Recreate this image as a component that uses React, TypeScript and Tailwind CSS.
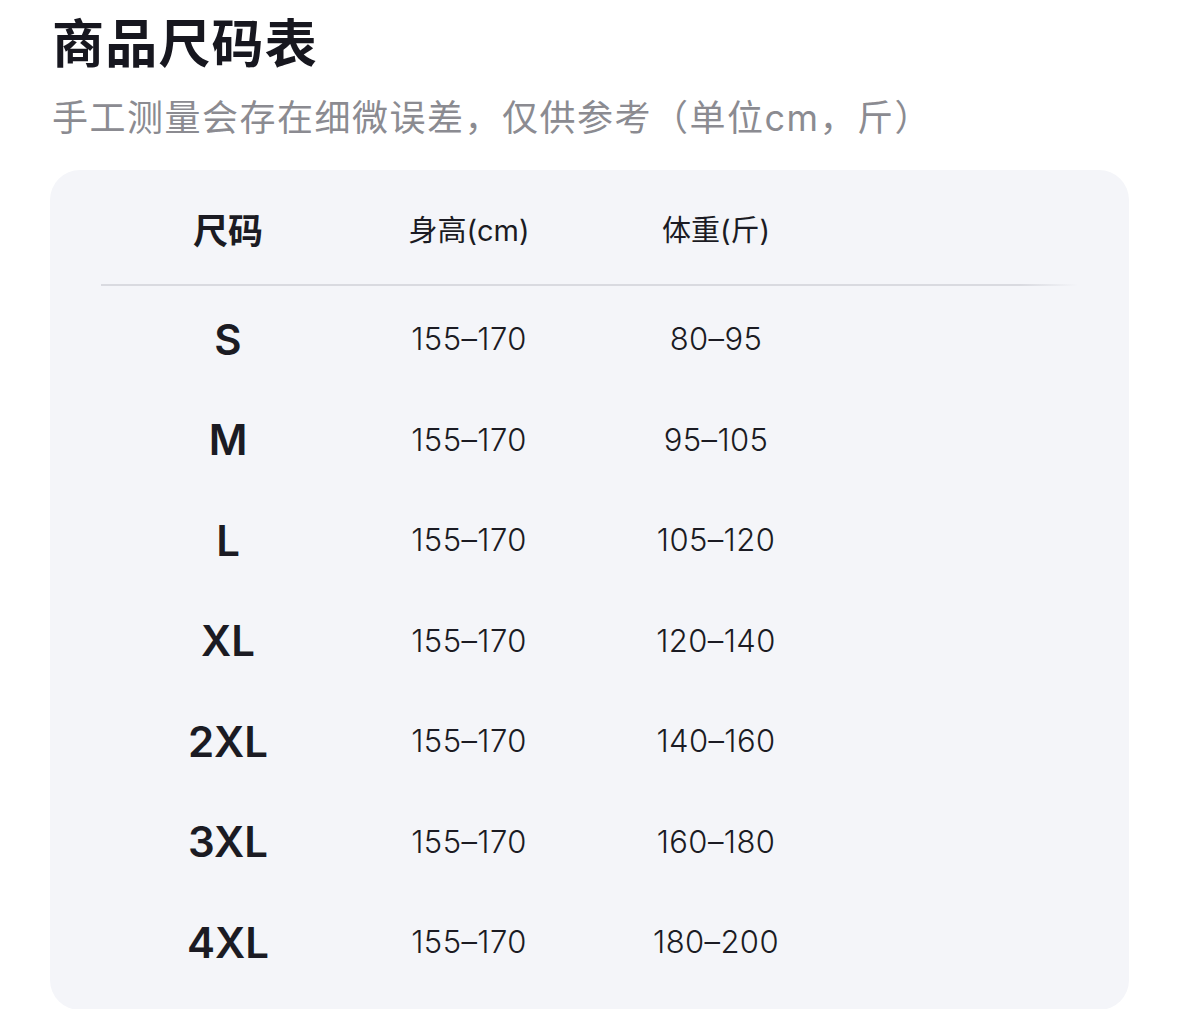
const rows = [
  { size: 'S', height: '155–170', weight: '80–95' },
  { size: 'M', height: '155–170', weight: '95–105' },
  { size: 'L', height: '155–170', weight: '105–120' },
  { size: 'XL', height: '155–170', weight: '120–140' },
  { size: '2XL', height: '155–170', weight: '140–160' },
  { size: '3XL', height: '155–170', weight: '160–180' },
  { size: '4XL', height: '155–170', weight: '180–200' },
]

const font = "font-['Inter','Noto_Sans_CJK_SC',sans-serif]"

export default function App() {
  return (
    <div className={`min-h-[1009px] bg-white px-[50px] pt-[19px] ${font}`}>
      <h1 className="h-[52px] pl-[2px] text-[52px] leading-[52px] font-bold tracking-[1.2px] text-[#17171f]">
        商品尺码表
      </h1>
      <p className="mt-[29px] h-[36px] pl-[2px] text-[36px] leading-[36px] tracking-[1.5px] text-[#8b8b91]">
        手工测量会存在细微误差，仅供参考（单位cm，斤）
      </p>

      <section className="mt-[34px] rounded-[30px] bg-[#f4f5f9] px-[51px] pt-[26px] pb-[17px]">
        <div className="grid h-[70px] grid-cols-[254px_228px_266px_1fr] items-center text-center text-[#1b1b23]">
          <span className="text-[35px] font-bold">尺码</span>
          <span className="text-[29px]">身高(cm)</span>
          <span className="text-[29px]">体重(斤)</span>
          <span />
        </div>
        <div className="mt-[18px] h-[2px] bg-[linear-gradient(to_right,#d9dae0_94%,rgba(217,218,224,0))]" />

        <div className="mt-[3px]">
          {rows.map((row) => (
            <div
              key={row.size}
              className="grid h-[100.5px] grid-cols-[254px_228px_266px_1fr] items-center text-center text-[#1b1b23]"
            >
              <span className="text-[42px] font-semibold">{row.size}</span>
              <span className="text-[31px] font-light tracking-[0.4px]">{row.height}</span>
              <span className="text-[31px] font-light tracking-[0.4px]">{row.weight}</span>
              <span />
            </div>
          ))}
        </div>
      </section>
    </div>
  )
}
